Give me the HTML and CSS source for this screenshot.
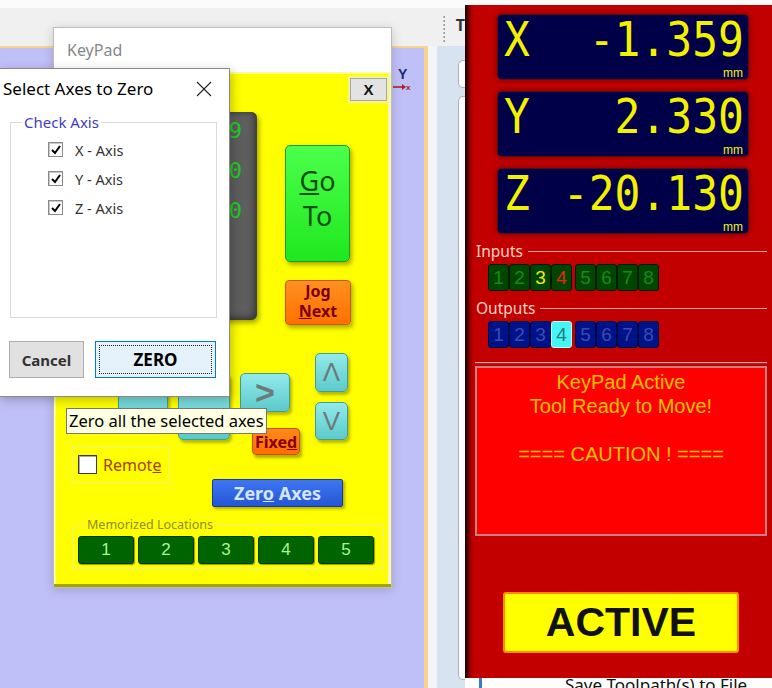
FILE: index.html
```html
<!DOCTYPE html>
<html lang="en">
<head>
<meta charset="utf-8">
<title>KeyPad</title>
<link rel="stylesheet" href="styles.css">
</head>
<body>
<div class="screen">
  <div class="app">
    <div class="leftpane">
      <div class="toolbar">
        <div class="gripper"></div>
        <span class="tb-label">T</span>
      </div>
      <div class="workspace">
        <div class="canvas">
          <svg class="axis-icon" width="24" height="30" viewBox="0 0 24 30">
            <text x="7" y="14" class="axis-y">Y</text>
            <line x1="2" y1="22" x2="13" y2="22" stroke="#b02020" stroke-width="1.6"/>
            <polygon points="11,19 15,22 11,25" fill="#b02020"/>
            <text x="15" y="25" class="axis-x">x</text>
          </svg>
        </div>
        <div class="gutter"></div>
        <div class="sidepanel">
          <div class="side-input short"></div>
          <div class="side-input tall"></div>
        </div>
      </div>
    </div>

    <div class="rightpane">
      <div class="rp-top"></div>
      <div class="dro-panel">
        <div class="dro">
          <span class="dro-axis">X</span>
          <span class="dro-val">-1.359</span>
          <span class="dro-unit">mm</span>
        </div>
        <div class="dro">
          <span class="dro-axis">Y</span>
          <span class="dro-val">2.330</span>
          <span class="dro-unit">mm</span>
        </div>
        <div class="dro">
          <span class="dro-axis">Z</span>
          <span class="dro-val">-20.130</span>
          <span class="dro-unit">mm</span>
        </div>

        <div class="io-label">Inputs</div>
        <div class="leds">
          <div class="led-group">
            <span class="led in">1</span><span class="led in">2</span><span class="led in on-yellow">3</span><span class="led in on-red">4</span>
          </div>
          <div class="led-group">
            <span class="led in">5</span><span class="led in">6</span><span class="led in">7</span><span class="led in">8</span>
          </div>
        </div>

        <div class="io-label">Outputs</div>
        <div class="leds">
          <div class="led-group">
            <span class="led out">1</span><span class="led out">2</span><span class="led out">3</span><span class="led out lit">4</span>
          </div>
          <div class="led-group">
            <span class="led out">5</span><span class="led out">6</span><span class="led out">7</span><span class="led out">8</span>
          </div>
        </div>

        <div class="separator"></div>

        <div class="msg">
          <div>KeyPad Active</div>
          <div>Tool Ready to Move!</div>
          <div>&nbsp;</div>
          <div>==== CAUTION ! ====</div>
        </div>

        <div class="active">ACTIVE</div>
      </div>
      <div class="rp-bottom">
        <div class="rp-bar"></div>
        <div class="rp-text">Save Toolpath(s) to File</div>
      </div>
    </div>
  </div>

  <div class="win keypad">
    <div class="kp-title">KeyPad</div>
    <div class="kp-body">
      <div class="kp-head"><div class="kp-close">X</div></div>
      <div class="kp-main">
        <div class="kp-dro">
          <div class="kp-dro-row">-1.359</div>
          <div class="kp-dro-row">2.330</div>
          <div class="kp-dro-row">-20.130</div>
        </div>
        <div class="kp-side">
          <div class="btn-goto"><span><u>G</u>o</span><span>To</span></div>
          <div class="btn-jog"><span><u>J</u>og</span><span><u>N</u>ext</span></div>
        </div>
      </div>
      <div class="kp-jog">
        <div class="tb tb-left"></div>
        <div class="tb tb-mid"></div>
        <div class="tb tb-right">&gt;</div>
        <div class="tb tb-up">Λ</div>
        <div class="tb tb-down">V</div>
        <div class="btn-fixed"><span>Fixe<u>d</u></span></div>
        <div class="remote"><span class="remote-box"></span><span class="remote-text">Remot<u>e</u></span></div>
        <div class="btn-zeroaxes"><span>Zer<u>o</u> Axes</span></div>
      </div>
      <fieldset class="memo">
        <legend>Memorized Locations</legend>
        <div class="memo-btn">1</div>
        <div class="memo-btn">2</div>
        <div class="memo-btn">3</div>
        <div class="memo-btn">4</div>
        <div class="memo-btn">5</div>
      </fieldset>
    </div>
  </div>

  <div class="win dialog">
    <div class="dlg-title">
      <span>Select Axes to Zero</span>
      <svg class="dlg-close" width="16" height="16" viewBox="0 0 16 16">
        <line x1="1" y1="1" x2="15" y2="15" stroke="#222" stroke-width="1.1"/>
        <line x1="15" y1="1" x2="1" y2="15" stroke="#222" stroke-width="1.1"/>
      </svg>
    </div>
    <fieldset class="dlg-group">
      <legend>Check Axis</legend>
      <div class="chk-row"><span class="chk"><svg width="12" height="12" viewBox="0 0 12 12"><polyline points="2,6 5,9 10,2" fill="none" stroke="#000" stroke-width="2"/></svg></span><span>X - Axis</span></div>
      <div class="chk-row"><span class="chk"><svg width="12" height="12" viewBox="0 0 12 12"><polyline points="2,6 5,9 10,2" fill="none" stroke="#000" stroke-width="2"/></svg></span><span>Y - Axis</span></div>
      <div class="chk-row"><span class="chk"><svg width="12" height="12" viewBox="0 0 12 12"><polyline points="2,6 5,9 10,2" fill="none" stroke="#000" stroke-width="2"/></svg></span><span>Z - Axis</span></div>
    </fieldset>
    <div class="dlg-buttons">
      <div class="btn-cancel">Cancel</div>
      <div class="btn-zero"><span class="btn-zero-focus">ZERO</span></div>
    </div>
  </div>

  <div class="tooltip">Zero all the selected axes</div>
</div>
</body>
</html>
```

FILE: styles.css
```css
* { box-sizing: border-box; margin: 0; padding: 0; }
html, body { width: 772px; height: 688px; overflow: hidden; }
body { font-family: "Noto Sans", "DejaVu Sans", sans-serif; background: #f1f1f1; }

.screen { position: relative; width: 772px; height: 688px; overflow: hidden; }
.app { display: flex; width: 772px; height: 688px; }

/* ---------- left application area ---------- */
.leftpane { width: 465px; flex: none; display: flex; flex-direction: column; overflow: hidden; }
.toolbar {
  height: 46px; flex: none; display: flex; align-items: flex-start; padding-left: 443px;
  background: linear-gradient(#fbfbfb 0, #fbfbfb 8px, #f0f0f0 8px);
}
.gripper {
  width: 3px; height: 27px; margin-top: 15px;
  background: radial-gradient(circle, #9c9c9c 1px, transparent 1.3px) 0 0 / 3px 4px;
}
.tb-label { margin-left: 11px; margin-top: 16px; font-size: 16px; font-weight: 700; color: #333; line-height: 18px; }

.workspace { flex: 1; display: flex; }
.canvas {
  position: relative; width: 428px; flex: none; background: #c0c0f8;
  border-top: 2px solid #f6d38e; border-right: 4px solid #f6d38e;
}
.axis-icon { position: absolute; left: 391px; top: 17px; }
.axis-y { font: bold 14px "Liberation Sans", sans-serif; fill: #1c2a70; }
.axis-x { font: bold 8px "Liberation Sans", sans-serif; fill: #a02020; }
.gutter { width: 9px; flex: none; background: #f4f5f7; }
.sidepanel {
  flex: 1; background: #d7e3f1; padding-top: 14px; padding-left: 21px;
  display: flex; flex-direction: column; gap: 8px; overflow: hidden;
}
.side-input { width: 30px; flex: none; border: 1px solid #a9b1bb; border-radius: 5px; background: #fff; }
.side-input.short { height: 28px; }
.side-input.tall { height: 584px; }

/* ---------- right DRO panel ---------- */
.rightpane { width: 307px; flex: none; display: flex; flex-direction: column; background: #fff; }
.rp-top { height: 5px; flex: none; background: #fafafa; }
.dro-panel {
  height: 673px; flex: none; display: flex; flex-direction: column;
  background: linear-gradient(90deg, #160000 0, #5a0000 3px, #a80000 6px, #c20000 9px);
}
.dro {
  margin: 13px 0 0 33px; width: 250px; height: 64px; flex: none;
  background: #000048; border-radius: 4px;
  box-shadow: 0 0 0 1px #5a0c0c, 0 0 5px 2px #8a0000;
  display: grid; grid-template-columns: auto 1fr; grid-template-rows: 50px 14px;
  padding: 0 4px 0 6px; color: #f2f200;
  font-family: "DejaVu Sans Mono", "Liberation Mono", monospace;
}
.dro:first-child { margin-top: 10px; }
.dro-axis, .dro-val { font-size: 43px; line-height: 50px; transform: scaleY(1.12); transform-origin: 50% 60%; }
.dro-val { justify-self: end; }
.dro-unit {
  grid-column: 1 / -1; justify-self: end; font: 12px/12px "Liberation Sans", sans-serif;
  margin-right: 1px; margin-top: 2px;
}

.io-label {
  display: flex; align-items: center; gap: 5px; height: 16px; flex: none;
  margin: 10px 5px 0 11px; font-size: 15.5px; line-height: 16px; color: #ffd4c4;
}
.io-label::after { content: ""; flex: 1; height: 1px; background: #eaa2a2; }
.leds + .io-label { margin-top: 9px; }
.leds { display: flex; gap: 3px; margin: 5px 0 0 23px; height: 27px; flex: none; }
.led-group { display: flex; }
.led {
  width: 21px; height: 27px; border-radius: 3px; text-align: center;
  font: 19px/25px "Liberation Sans", sans-serif;
}
.led.in { background: #004600; border: 1px solid #001a00; color: #1a8a1a; }
.led.in.on-yellow { color: #ecec10; }
.led.in.on-red { color: #e42810; }
.led.out { background: #00128a; border: 1px solid #000840; color: #3a4cae; }
.led.out.lit { background: #44f6f6; border: 1px solid #b0ffff; color: #2a7a80; }

.separator {
  margin: 14px 0 0 10px; width: 292px; height: 2px; flex: none;
  background: #d89898; border-bottom: 1px solid #a03030;
}
.msg {
  margin: 2px 0 0 10px; width: 292px; height: 170px; flex: none;
  background: #ff0000; border: 2px solid #c98080;
  color: #ffc000; font: 20px/24px "Liberation Sans", sans-serif; text-align: center;
  padding-top: 2px;
}
.active {
  margin: 56px 0 0 38px; width: 236px; height: 61px; flex: none;
  background: #ffff00; border: 2px solid #ff8c00; border-radius: 3px;
  display: flex; align-items: center; justify-content: center;
  font: bold 41px "Liberation Sans", sans-serif; color: #111;
}
.rp-bottom { flex: 1; display: flex; overflow: hidden; background: #fff; }
.rp-bar { width: 3px; margin-left: 14px; background: #3a78c8; flex: none; }
.rp-text { margin-left: 83px; margin-top: -3px; font-size: 17px; line-height: 20px; color: #111; white-space: nowrap; }

/* ---------- windows ---------- */
.win { position: absolute; }

.keypad {
  left: 53px; top: 27px; width: 339px; height: 561px;
  border: 1px solid #bdbdbd; background: #fff;
  box-shadow: 0 2px 10px rgba(0, 0, 0, 0.18);
  display: flex; flex-direction: column;
}
.kp-title { height: 44px; flex: none; padding-left: 13px; font-size: 16px; line-height: 44px; color: #878787; }
.kp-body {
  flex: 1; background: #ffff00; display: flex; flex-direction: column;
  box-shadow: inset 0 -3px 0 #a6a200, inset -3px 0 0 #f6f6b8, inset 2px 2px 0 #ffff90;
}
.kp-head { height: 29px; flex: none; display: flex; }
.kp-close {
  margin: 6px 4px 0 auto; width: 37px; height: 23px;
  background: #e3e3e3; border: 1px solid #a8a8a8; box-shadow: 0 0 0 2px #f4f490;
  font: bold 15px/21px "Liberation Sans", sans-serif; text-align: center; color: #111;
}
.kp-main { display: flex; align-items: flex-start; margin-top: 11px; height: 213px; flex: none; }
.kp-dro {
  margin-left: 16px; width: 187px; height: 208px; flex: none;
  background: #5e5e5e; border-radius: 6px;
  box-shadow: inset -3px -3px 6px #3a3a3a, inset 2px 2px 4px #4a4a4a, 2px 3px 5px rgba(90, 90, 0, 0.55);
  display: flex; flex-direction: column; gap: 10px; padding: 4px 15px 0 0;
}
.kp-dro-row {
  height: 30px; text-align: right; color: #22cc22;
  font: 22px/30px "DejaVu Sans Mono", monospace;
}
.kp-side { display: flex; flex-direction: column; margin-left: 28px; margin-top: 33px; }
.btn-goto {
  width: 65px; height: 117px; border-radius: 5px;
  background: linear-gradient(#4cff4c, #1ee81e);
  border: 1px solid #1d9a1d; box-shadow: 2px 3px 4px rgba(110, 110, 0, 0.55);
  display: flex; flex-direction: column; align-items: center; padding-top: 17px;
  font-size: 27px; line-height: 35px; color: #124f12;
}
.btn-jog {
  width: 66px; height: 45px; margin-top: 18px; border-radius: 4px;
  background: linear-gradient(#ff9020, #ff7000);
  border: 1px solid #c05800; box-shadow: 2px 3px 4px rgba(110, 110, 0, 0.55);
  display: flex; flex-direction: column; align-items: center; padding-top: 0;
  font-size: 16px; font-weight: 700; line-height: 20px; color: #7a0000;
}

.kp-jog {
  display: grid; margin-top: 28px; flex: none;
  grid-template-columns: 64px 50px 10px 52px 10px 50px 25px 33px;
  grid-template-rows: 20px 19px 10px 10px 16px 12px 6px 9px 24px 4px 24px;
}
.tb {
  border-radius: 5px; background: linear-gradient(#92eaea, #5ccaca);
  border: 1px solid #3f9c9c; box-shadow: 2px 3px 3px rgba(100, 100, 0, 0.45);
  display: flex; align-items: center; justify-content: center;
  font: 26px "Liberation Sans", sans-serif; color: #6c7a7a;
}
.tb-left { grid-column: 2; grid-row: 2 / 6; }
.tb-mid { grid-column: 4; grid-row: 2 / 7; }
.tb-right { grid-column: 6; grid-row: 2 / 5; font-weight: 700; font-size: 34px; }
.tb-up { grid-column: 8; grid-row: 1 / 3; }
.tb-down { grid-column: 8; grid-row: 4 / 7; }
.btn-fixed {
  grid-column: 6 / 8; grid-row: 6 / 9; justify-self: start; margin-left: 12px; width: 48px;
  border-radius: 4px; background: linear-gradient(#ff8a1a, #ff6e00);
  border: 1px solid #c05000; box-shadow: 2px 3px 3px rgba(100, 100, 0, 0.5);
  display: flex; align-items: center; justify-content: center;
  font-size: 16px; font-weight: 700; color: #860000;
}
.remote {
  grid-column: 1 / 3; grid-row: 8 / 11; margin-left: 18px; width: 98px;
  border: 1px solid #f2f280; display: flex; align-items: center; padding-left: 5px; gap: 6px;
}
.remote-box { width: 19px; height: 19px; background: #fff; border: 1px solid #3a3a3a; box-shadow: inset 1px 1px 0 #aaa; flex: none; }
.remote-text { font-size: 16px; color: #a83c00; }
.btn-zeroaxes {
  grid-column: 4 / 9; grid-row: 10 / 12; margin-left: 34px; width: 131px;
  border-radius: 2px; background: linear-gradient(#3e76f2, #2456d6);
  border: 1px solid #1a3c98; box-shadow: 2px 2px 3px rgba(100, 100, 0, 0.5);
  display: flex; align-items: center; justify-content: center;
  font-size: 18px; font-weight: 700; color: #d6e6ff;
}
.memo {
  margin: 11px 0 0 19px; width: 310px; height: 52px; flex: none;
  border: 1px solid #f0f080; padding: 4px 4px 0 4px;
  display: flex; gap: 4px;
}
.memo legend {
  margin-left: 7px; padding: 0 2px; font-size: 12.5px; line-height: 14px; color: #8d8a3d;
}
.memo-btn {
  width: 56px; height: 28px; border-radius: 3px; background: #006400;
  border: 1px solid #003a00; box-shadow: 1px 1px 1px rgba(0, 0, 0, 0.4);
  text-align: center; font: 17px/26px "Liberation Sans", sans-serif; color: #a8f890;
}

/* ---------- dialog ---------- */
.dialog {
  left: -1px; top: 68px; width: 231px; height: 329px;
  background: #fff; border: 1px solid #8a8a8a;
  box-shadow: 2px 3px 10px rgba(0, 0, 0, 0.25);
  display: flex; flex-direction: column;
}
.dlg-title {
  height: 39px; flex: none; display: flex; align-items: center;
  padding-left: 3px; padding-right: 17px; font-size: 17px; color: #000;
}
.dlg-close { margin-left: auto; }
.dlg-group {
  margin: 4px 0 0 10px; width: 207px; height: 206px; flex: none;
  border: 1px solid #d9d9d9; padding: 3px 0 0 11px;
}
.dlg-group legend { padding: 0 2px; font-size: 15px; line-height: 20px; color: #3c3cc8; }
.chk-row { display: flex; align-items: center; height: 29px; padding-left: 26px; gap: 12px; font-size: 14.5px; color: #333; }
.chk {
  width: 15px; height: 15px; flex: none; background: #fff;
  border: 1px solid #8a8a8a; box-shadow: inset 1px 1px 0 #c8c8c8;
  display: flex; align-items: center; justify-content: center;
}
.dlg-buttons { display: flex; gap: 11px; margin-top: 23px; padding-left: 9px; }
.btn-cancel {
  width: 75px; height: 37px; background: #e1e1e1; border: 1px solid #adadad;
  display: flex; align-items: center; justify-content: center;
  font-size: 15px; font-weight: 700; color: #333;
}
.btn-zero {
  width: 121px; height: 37px; background: #e5f1fb; border: 1px solid #0078d7;
  padding: 3px; display: flex;
}
.btn-zero-focus {
  flex: 1; border: 1px dotted #222; display: flex; align-items: center; justify-content: center;
  font-size: 17px; font-weight: 700; color: #000;
}

/* ---------- tooltip ---------- */
.tooltip {
  position: absolute; left: 66px; top: 408px; width: 201px; height: 26px;
  background: #ffffe1; border: 1px solid #767676;
  font-size: 16.5px; line-height: 24px; padding-left: 2px; color: #000; white-space: nowrap;
}
```
